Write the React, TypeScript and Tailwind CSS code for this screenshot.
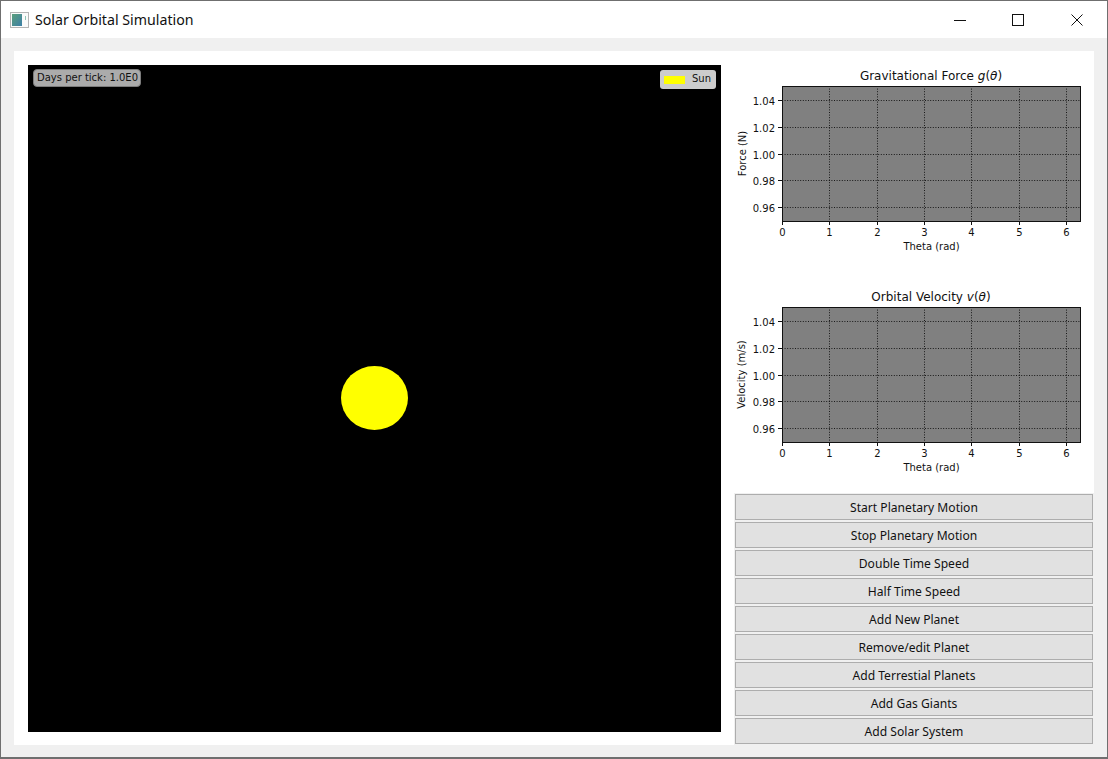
const XTICKS = [61, 108, 156, 203, 250, 298, 345];
const YLABELS = ["1.04", "1.02", "1.00", "0.98", "0.96"];
const BUTTONS = [
  "Start Planetary Motion",
  "Stop Planetary Motion",
  "Double Time Speed",
  "Half Time Speed",
  "Add New Planet",
  "Remove/edit Planet",
  "Add Terrestial Planets",
  "Add Gas Giants",
  "Add Solar System",
];

interface PlotProps {
  title: string;
  symbol: string;
  ylabel: string;
  ylabelX: number;
  top: number;
  bottom: number;
  yticks: number[];
}

function Plot({ title, symbol, ylabel, ylabelX, top, bottom, yticks }: PlotProps) {
  return (
    <svg width="373" height="220" className="block shrink-0 font-['DejaVu_Sans',sans-serif]">
      <rect x="61.5" y={top + 0.5} width="298" height={bottom - top} fill="#808080" />
      {XTICKS.slice(1).map((x) => (
        <line key={x} x1={x + 0.5} x2={x + 0.5} y1={top} y2={bottom} stroke="#000" strokeWidth="1" strokeDasharray="1 1.6" opacity="0.8" />
      ))}
      {yticks.map((y) => (
        <line key={y} x1="61" x2="360" y1={y + 0.5} y2={y + 0.5} stroke="#000" strokeWidth="1" strokeDasharray="1 1.6" opacity="0.8" />
      ))}
      <rect x="61.5" y={top + 0.5} width="298" height={bottom - top} fill="none" stroke="#111" strokeWidth="1" />
      {XTICKS.map((x, i) => (
        <g key={x}>
          <line x1={x + 0.5} x2={x + 0.5} y1={bottom} y2={bottom + 4} stroke="#111" />
          <text x={x + 0.5} y={bottom + 15} fontSize="10" textAnchor="middle" fill="#111">
            {i}
          </text>
        </g>
      ))}
      {yticks.map((y, i) => (
        <g key={y}>
          <line x1="57" x2="61" y1={y + 0.5} y2={y + 0.5} stroke="#111" />
          <text x="54" y={y + 4.5} fontSize="10" textAnchor="end" fill="#111">
            {YLABELS[i]}
          </text>
        </g>
      ))}
      <text x="210.5" y={bottom + 29} fontSize="10" textAnchor="middle" fill="#111">
        Theta (rad)
      </text>
      <text transform={`translate(${ylabelX} ${(top + bottom) / 2}) rotate(-90)`} fontSize="10" textAnchor="middle" fill="#111">
        {ylabel}
      </text>
      <text x="210" y={top - 6} fontSize="12" textAnchor="middle" fill="#111">
        {title} <tspan fontStyle="italic">{symbol}</tspan>(<tspan fontStyle="italic">θ</tspan>)
      </text>
    </svg>
  );
}

function AppIcon() {
  return (
    <svg width="19" height="16" viewBox="0 0 19 16" className="shrink-0">
      <defs>
        <linearGradient id="icon-fill" x1="0" y1="0" x2="1" y2="1">
          <stop offset="0" stopColor="#5a9f7c" />
          <stop offset="1" stopColor="#3d7fa6" />
        </linearGradient>
      </defs>
      <rect x="0.5" y="0.5" width="18" height="15" fill="#fafafa" stroke="#b4b4b4" />
      <rect x="2" y="2" width="10" height="12" fill="url(#icon-fill)" />
      <rect x="15" y="4" width="1" height="4" fill="#8fc4b4" />
    </svg>
  );
}

export default function App() {
  return (
    <div className="flex h-[759px] w-[1108px] flex-col overflow-hidden border border-b-2 border-[#6f6f6f] bg-[#f0f0f0]">
      <div className="flex h-[37px] shrink-0 items-center bg-white pl-[9px]">
        <AppIcon />
        <span className="ml-[6px] font-['Noto_Sans',sans-serif] text-[14.2px] text-[#111]">Solar Orbital Simulation</span>
        <div className="ml-auto flex h-full pr-px">
          <div className="flex h-full w-[58px] items-center justify-center">
            <svg width="12" height="12" viewBox="0 0 12 12">
              <line x1="0" x2="12" y1="6.5" y2="6.5" stroke="#111" />
            </svg>
          </div>
          <div className="flex h-full w-[58px] items-center justify-center">
            <svg width="12" height="12" viewBox="0 0 12 12">
              <rect x="0.5" y="0.5" width="11" height="11" fill="none" stroke="#111" />
            </svg>
          </div>
          <div className="ml-px flex h-full w-[58px] items-center justify-center">
            <svg width="12" height="12" viewBox="0 0 12 12">
              <path d="M0.5 0.5L11.5 11.5M11.5 0.5L0.5 11.5" fill="none" stroke="#111" />
            </svg>
          </div>
        </div>
      </div>

      <div className="flex flex-1 pb-[12px] pl-[13px] pr-[13px] pt-[13px]">
        <div className="flex h-[694px] w-[1080px] bg-white">
          <div className="pl-[14px] pt-[14px]">
            <div className="relative flex h-[667px] w-[693px] items-center justify-center bg-black font-['DejaVu_Sans',sans-serif] text-[10px] text-[#111]">
              <div className="mb-[2px] mr-px h-[64px] w-[67px] rounded-[50%] bg-[#ffff00]" />
              <div className="absolute left-[5px] top-[4px] flex h-[18px] w-[108px] items-center rounded-[4px] border border-[#7c7c7c] bg-[#ababab] pb-[2px] pl-[3px]">
                Days per tick: 1.0E0
              </div>
              <div className="absolute right-[5px] top-[5px] flex h-[19px] w-[56px] items-center rounded-[3px] bg-[#cccccc] pl-[4px]">
                <div className="h-[8px] w-[21px] bg-[#ffff00]" />
                <span className="mb-[2px] ml-[7px]">Sun</span>
              </div>
            </div>
          </div>

          <div className="flex w-[373px] flex-col">
            <Plot
              title="Gravitational Force"
              symbol="g"
              ylabel="Force (N)"
              ylabelX={24.5}
              top={35}
              bottom={170}
              yticks={[49, 76, 103, 129, 156]}
            />
            <Plot
              title="Orbital Velocity"
              symbol="v"
              ylabel="Velocity (m/s)"
              ylabelX={23.5}
              top={36}
              bottom={171}
              yticks={[50, 77, 104, 130, 157]}
            />
            <div className="ml-[13px] mt-[2px] flex w-[360px] flex-col gap-[2px] bg-[#f0f0f0] p-px">
              {BUTTONS.map((label) => (
                <button
                  key={label}
                  className="flex h-[26px] w-[358px] items-center justify-center border border-[#adadad] bg-[#e1e1e1] pt-[2px] font-['Noto_Sans',sans-serif] text-[12.1px] text-[#111]"
                >
                  {label}
                </button>
              ))}
            </div>
          </div>
        </div>
      </div>
    </div>
  );
}
